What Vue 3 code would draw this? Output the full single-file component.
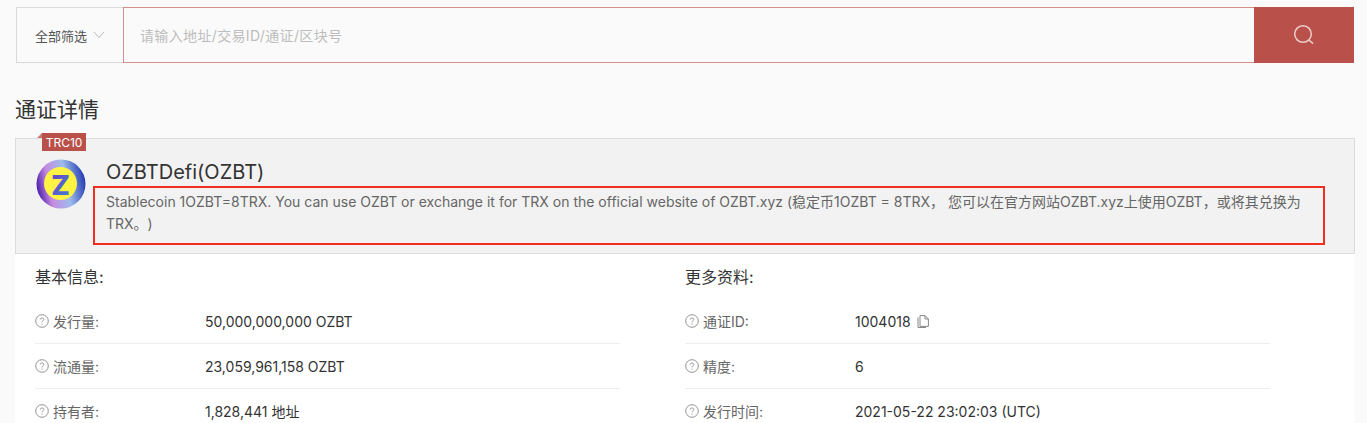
<script setup>
const basic = [
  { label: '发行量:', value: '50,000,000,000 OZBT' },
  { label: '流通量:', value: '23,059,961,158 OZBT' },
  { label: '持有者:', value: '1,828,441 地址' },
]
const more = [
  { label: '通证ID:', value: '1004018', copy: true },
  { label: '精度:', value: '6' },
  { label: '发行时间:', value: '2021-05-22 23:02:03 (UTC)' },
]
const columns = [
  { title: '基本信息:', rows: basic },
  { title: '更多资料:', rows: more },
]
</script>

<template>
  <div class="page">
    <div class="search">
      <div class="select">
        <span>全部筛选</span>
        <svg class="chev" width="12" height="8" viewBox="0 0 12 8"><path d="M1 1l5 5.6L11 1" fill="none" stroke="#bbb" stroke-width="1"/></svg>
      </div>
      <div class="input">请输入地址/交易ID/通证/区块号</div>
      <div class="btn">
        <svg width="22" height="22" viewBox="0 0 22 22"><circle cx="10" cy="10" r="8.3" fill="none" stroke="#eccfcc" stroke-width="1.5"/><path d="M16 16l4 3.6" stroke="#eccfcc" stroke-width="1.5" fill="none"/></svg>
      </div>
    </div>

    <h1 class="title">通证详情</h1>

    <div class="card">
      <div class="tag"><span class="fold"></span>TRC10</div>
      <svg class="logo" width="50" height="50" viewBox="0 0 50 50">
        <defs>
          <linearGradient id="ring" x1="0" y1="0.55" x2="1" y2="0.35">
            <stop offset="0" stop-color="#4a1fae"/>
            <stop offset="0.25" stop-color="#c68be0"/>
            <stop offset="0.6" stop-color="#9dbcec"/>
            <stop offset="1" stop-color="#1f35b0"/>
          </linearGradient>
          <linearGradient id="zed" x1="0" y1="0" x2="1" y2="1">
            <stop offset="0" stop-color="#6f3cc0"/>
            <stop offset="1" stop-color="#3f84d8"/>
          </linearGradient>
        </defs>
        <circle cx="25" cy="25" r="24.5" fill="url(#ring)"/>
        <circle cx="24.5" cy="24.5" r="16.5" fill="#fff443"/>
        <text x="24.5" y="35.5" text-anchor="middle" class="zed" fill="url(#zed)">Z</text>
      </svg>
      <div class="info">
        <div class="name">OZBTDefi(OZBT)</div>
        <p class="desc">Stablecoin 1OZBT=8TRX. You can use OZBT or exchange it for TRX on the official website of OZBT.xyz (稳定币1OZBT = 8TRX， 您可以在官方网站OZBT.xyz上使用OZBT，或将其兑换为TRX。)</p>
      </div>
      <div class="mark"></div>
    </div>

    <div class="details">
      <section v-for="col in columns" :key="col.title" class="col">
        <h2 class="col-title">{{ col.title }}</h2>
        <div v-for="row in col.rows" :key="row.label" class="row">
          <div class="label">
            <svg width="14" height="14" viewBox="0 0 14 14" class="help">
              <circle cx="7" cy="7" r="6.3" fill="none" stroke="#888" stroke-width="0.9"/>
              <path d="M5.2 5.6c0-1 .8-1.6 1.8-1.6s1.8.6 1.8 1.5c0 1.3-1.8 1.4-1.8 2.8" fill="none" stroke="#888" stroke-width="0.9"/>
              <circle cx="7" cy="10.1" r="0.6" fill="#888"/>
            </svg>
            <span>{{ row.label }}</span>
          </div>
          <div class="value">
            <span>{{ row.value }}</span>
            <svg v-if="row.copy" class="copy" width="12" height="13" viewBox="0 0 12 13">
              <path d="M3 .6h5.2L11.4 4v7.4H3z" fill="none" stroke="#888" stroke-width="1"/>
              <path d="M8 .8V4h3.2" fill="none" stroke="#888" stroke-width="1"/>
              <path d="M1 2.5v10h8" fill="none" stroke="#888" stroke-width="1"/>
            </svg>
          </div>
        </div>
      </section>
    </div>
  </div>
</template>

<style scoped>
.page {
  height: 423px;
  overflow: hidden;
  box-sizing: border-box;
  padding: 7px 12px 0 15px;
  background: #fafafa;
  color: #333;
  font-family: Inter, "Noto Sans CJK SC", sans-serif;
  text-spacing-trim: space-all;
}
.search {
  display: flex;
  height: 56px;
  margin: 0 1px;
  box-sizing: border-box;
}
.select {
  width: 107px;
  box-sizing: border-box;
  border: 1px solid #d9d9d9;
  border-right: 0;
  display: flex;
  align-items: center;
  padding-left: 18px;
  gap: 6px;
  font-size: 13px;
  color: #555;
}
.input {
  flex: 1;
  box-sizing: border-box;
  border: 1px solid #d48e8c;
  border-right: 0;
  display: flex;
  align-items: center;
  padding-left: 16px;
  padding-bottom: 1px;
  font-size: 14px;
  letter-spacing: 0.35px;
  color: #bdbdbd;
}
.btn {
  width: 100px;
  background: #b9514a;
  display: flex;
  align-items: center;
  justify-content: center;
}
.title {
  margin: 34px 0 0;
  font-size: 21px;
  font-weight: 400;
  line-height: 26px;
  color: #333;
}
.card {
  position: relative;
  margin-top: 15px;
  height: 116px;
  box-sizing: border-box;
  border: 1px solid #dcdcdc;
  background: #f2f2f2;
  display: flex;
  padding: 20px 0 0 20px;
}
.tag {
  position: absolute;
  left: 26px;
  top: -6px;
  height: 18px;
  width: 44px;
  background: #b9514a;
  color: #fff;
  font-size: 12px;
  line-height: 19px;
  text-align: center;
}
.fold {
  position: absolute;
  left: -5px;
  top: 0;
  width: 0;
  height: 0;
  border-bottom: 5px solid #c9766f;
  border-left: 5px solid transparent;
}
.logo { flex: none; }
.zed {
  font-size: 27.5px;
  font-weight: 800;
}
.info {
  margin-left: 20px;
  flex: 1;
  min-width: 0;
}
.name {
  font-size: 20px;
  line-height: 26px;
  color: #333;
}
.desc {
  margin: 6px 0 0;
  width: 1200px;
  font-size: 14px;
  line-height: 22px;
  color: #666;
}
.mark {
  position: absolute;
  left: 77px;
  top: 47px;
  width: 1232px;
  height: 59px;
  box-sizing: border-box;
  border: 2px solid #ee2f22;
}
.details {
  background: #fff;
  display: flex;
  gap: 65px;
  padding: 0 20px;
  height: 170px;
}
.col { width: 585px; }
.col-title {
  margin: 0;
  height: 45px;
  line-height: 46px;
  font-size: 16px;
  font-weight: 400;
  color: #333;
}
.row {
  display: flex;
  align-items: center;
  height: 45px;
  box-sizing: border-box;
  border-bottom: 1px solid #eee;
  font-size: 14px;
}
.label {
  width: 170px;
  display: flex;
  align-items: center;
  gap: 4px;
  color: #666;
  font-size: 14px;
}
.help { flex: none; }
.value {
  display: flex;
  align-items: center;
  gap: 6px;
  color: #333;
}
</style>

<style>
html, body { margin: 0; background: #fafafa; }
</style>
